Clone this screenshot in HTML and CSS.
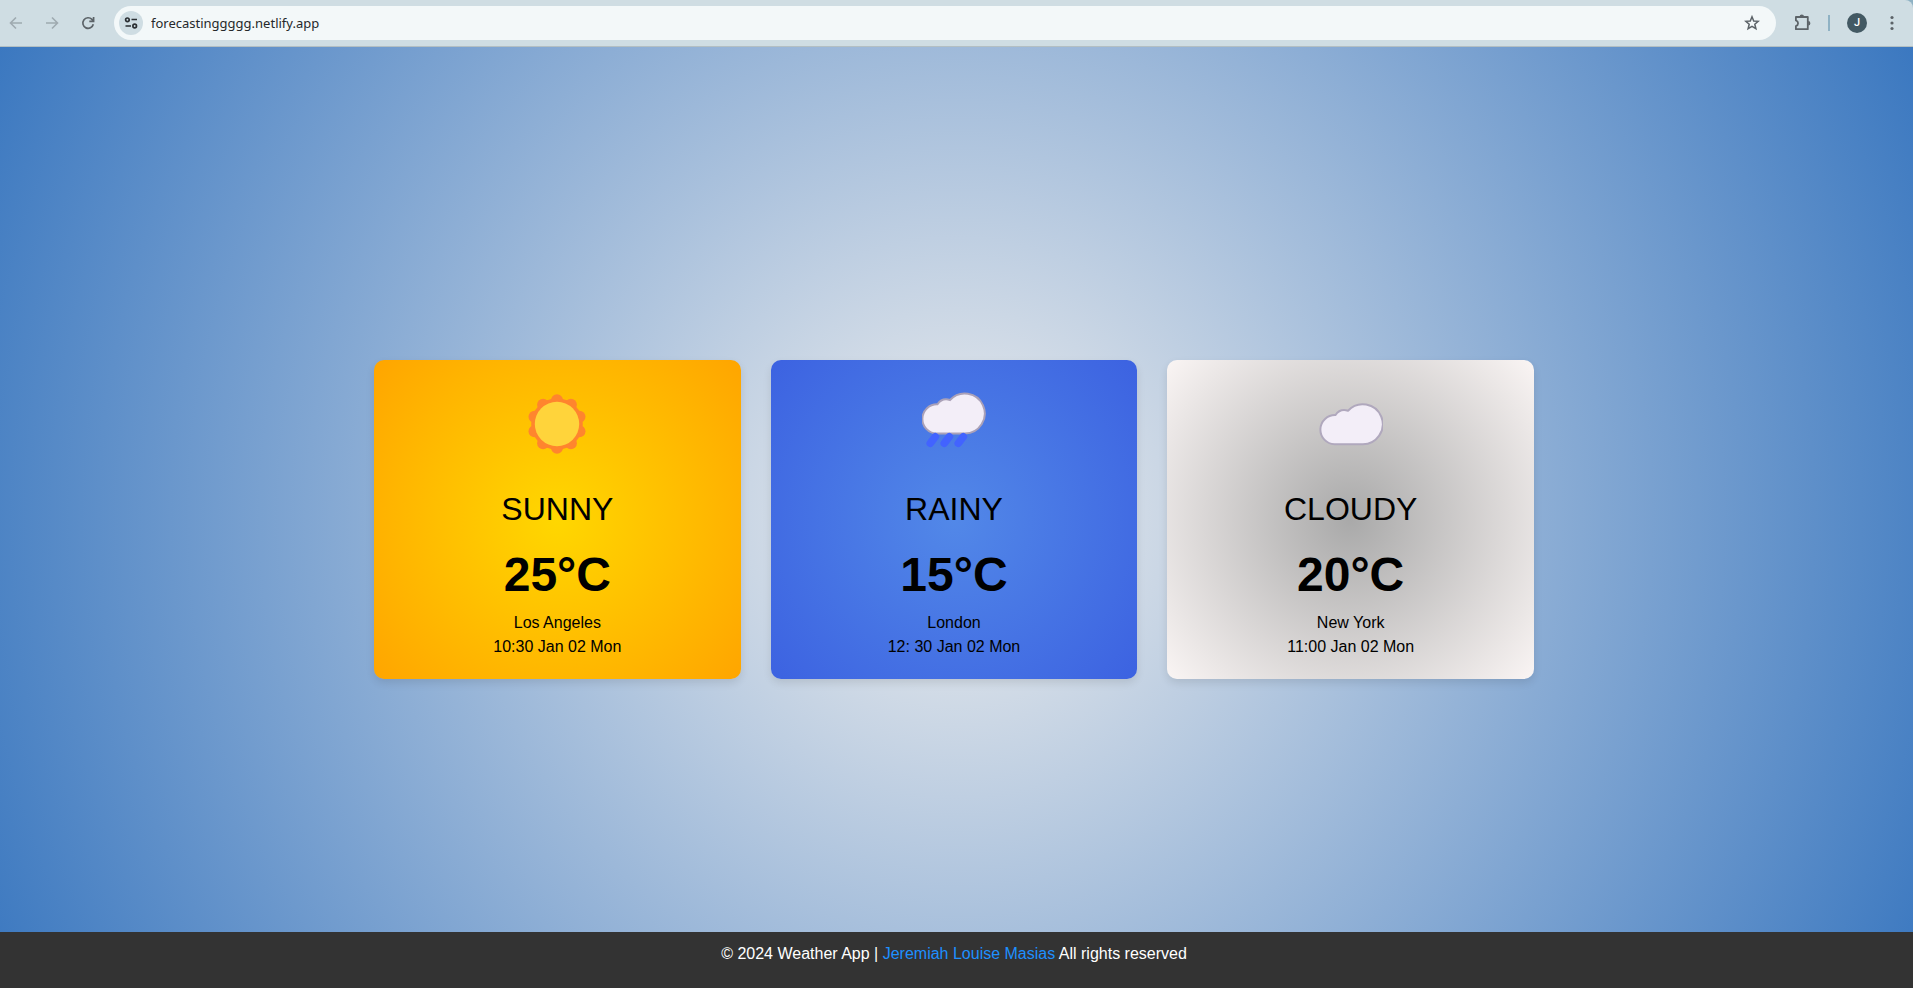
FILE: index.html
```html
<!DOCTYPE html>
<html lang="en">
<head>
<meta charset="utf-8">
<title>Weather App</title>
<link rel="stylesheet" href="styles.css">
</head>
<body>
<header class="toolbar">
  <nav class="nav-buttons" aria-label="Browser navigation">
    <button class="icon-button disabled" type="button" aria-label="Back">
      <svg width="16" height="16" viewBox="0 0 16 16" fill="none" stroke="currentColor" stroke-width="1.6"><path d="M14 8H3M8 2.5L2.5 8L8 13.500"/></svg>
    </button>
    <button class="icon-button disabled" type="button" aria-label="Forward">
      <svg width="16" height="16" viewBox="0 0 16 16" fill="none" stroke="currentColor" stroke-width="1.6"><path d="M2 8H13M8 2.500L13.500 8L8 13.500"/></svg>
    </button>
    <button class="icon-button" type="button" aria-label="Reload">
      <svg width="16" height="16" viewBox="0 0 16 16" fill="none" stroke="currentColor" stroke-width="1.7"><path d="M13.300 9.300A5.300 5.300 0 1 1 12 4.400L13.300 5.700M13.600 2V6.300H9.300"/></svg>
    </button>
  </nav>
  <div class="address-bar">
    <button class="site-info" type="button" aria-label="Site information">
      <svg width="14" height="14" viewBox="0 0 14 14" fill="none" stroke="currentColor" stroke-width="1.700"><circle cx="3.400" cy="3.800" r="1.800"/><path d="M7.500 3.500H13M1.500 10H7"/><circle cx="10.700" cy="10" r="1.800"/></svg>
    </button>
    <input class="address" type="text" aria-label="Address" value="forecastinggggg.netlify.app">
    <button class="bookmark" type="button" aria-label="Bookmark">
      <svg width="16" height="16" viewBox="0 0 16 16" fill="none" stroke="currentColor" stroke-width="1.500"><path d="M8 1.800L9.700 6L14.200 6.300L10.800 9.200L11.900 13.700L8 11.300L4.100 13.700L5.200 9.200L1.800 6.300L6.300 6Z"/></svg>
    </button>
  </div>
  <div class="toolbar-actions">
    <button class="icon-button" type="button" aria-label="Extensions">
      <svg width="18" height="18" viewBox="0 0 18 18"><path d="M2.900 3H14.800V15.200H2.900V12C5.800 11 5.800 7.400 2.900 6.400Z" fill="none" stroke="currentColor" stroke-width="1.800" stroke-linejoin="round"/><path d="M6.600 2.600A2.200 2.200 0 0 1 11 2.600ZM15.200 7A2.200 2.200 0 0 1 15.200 11.400Z" fill="currentColor"/></svg>
    </button>
    <span class="divider"></span>
    <button class="avatar" type="button" aria-label="Profile">J</button>
    <button class="icon-button" type="button" aria-label="Menu">
      <svg width="16" height="16" viewBox="0 0 16 16" fill="currentColor"><circle cx="8" cy="2.500" r="1.600"/><circle cx="8" cy="8" r="1.600"/><circle cx="8" cy="13.500" r="1.600"/></svg>
    </button>
  </div>
</header>

<div class="page">
  <main class="forecast">
    <article class="card sunny">
      <svg class="weather-icon" viewBox="0 0 64 64" aria-hidden="true">
        <g fill="#ff852e"><circle cx="32" cy="32" r="25.800"/>
        <circle cx="32" cy="8.300" r="6"/><circle cx="45.900" cy="12.800" r="6"/><circle cx="54.500" cy="24.700" r="6"/><circle cx="54.500" cy="39.300" r="6"/><circle cx="45.900" cy="51.200" r="6"/><circle cx="32" cy="55.700" r="6"/><circle cx="18.100" cy="51.200" r="6"/><circle cx="9.500" cy="39.300" r="6"/><circle cx="9.500" cy="24.700" r="6"/><circle cx="18.100" cy="12.800" r="6"/></g>
        <circle cx="32" cy="32" r="22.200" fill="#ffd43b"/>
      </svg>
      <h2 class="condition">SUNNY</h2>
      <p class="temperature">25°C</p>
      <p class="detail">Los Angeles</p>
      <p class="detail">10:30 Jan 02 Mon</p>
    </article>
    <article class="card rainy">
      <svg class="weather-icon" viewBox="0 0 64 64" aria-hidden="true">
        <path d="M14.500 41.500A14.500 14.500 0 0 1 15.500 12.300Q20 5.500 28 8A20 20 0 1 1 43 41.500Z" fill="#f3eef8" stroke="#aaa1b8" stroke-width="2"/>
        <path d="M13.300 44.700L8.300 51.300M27.300 44.700L22.300 51.300M41.300 44.700L36.300 51.300" stroke="#4263ff" stroke-width="7.600" stroke-linecap="round"/>
      </svg>
      <h2 class="condition">RAINY</h2>
      <p class="temperature">15°C</p>
      <p class="detail">London</p>
      <p class="detail">12: 30 Jan 02 Mon</p>
    </article>
    <article class="card cloudy">
      <svg class="weather-icon" viewBox="0 0 64 64" aria-hidden="true">
        <path d="M15.500 52.200A14.500 14.500 0 0 1 16.500 23Q21 16.200 29 18.700A20 20 0 1 1 43 52.200Z" fill="#f3eef8" stroke="#b0a8bd" stroke-width="2"/>
      </svg>
      <h2 class="condition">CLOUDY</h2>
      <p class="temperature">20°C</p>
      <p class="detail">New York</p>
      <p class="detail">11:00 Jan 02 Mon</p>
    </article>
  </main>
  <footer class="footer">
    <p>© 2024 Weather App | <a href="#">Jeremiah Louise Masias</a> All rights reserved</p>
  </footer>
</div>
</body>
</html>
```
FILE: styles.css
```css
* {
  box-sizing: border-box;
}

body {
  display: flex;
  flex-direction: column;
  min-height: 100vh;
  margin: 0;
  background: #8fb2c4;
  color: #000;
  font: 16px/24px "Liberation Sans", Arial, sans-serif;
}

h2,
p {
  margin: 0;
}

button {
  display: flex;
  align-items: center;
  justify-content: center;
  padding: 0;
  border: 0;
  background: none;
  color: #5c6368;
}

.toolbar {
  display: flex;
  align-items: center;
  gap: 10px;
  height: 47px;
  padding: 0 8px 1px;
  border-bottom: 1px solid #b3bfc3;
  border-top-right-radius: 8px;
  background: #cfdde3;
}

.nav-buttons {
  display: flex;
  gap: 20px;
  padding-right: 8px;
}

.nav-buttons .icon-button {
  width: 16px;
  height: 16px;
}

.icon-button.disabled {
  color: #9faab0;
}

.address-bar {
  display: flex;
  flex: 1;
  align-items: center;
  gap: 8px;
  height: 34px;
  padding: 0 16px 0 5px;
  border-radius: 17px;
  background: #f3f8f9;
}

.site-info {
  width: 24px;
  height: 24px;
  border-radius: 50%;
  background: #cfdde3;
  color: #2b2f33;
}

.address {
  flex: 1;
  min-width: 0;
  padding: 0;
  border: 0;
  outline: 0;
  background: none;
  color: #25282b;
  font: 13px/20px "Noto Sans", "Open Sans", sans-serif;
}

.toolbar-actions {
  display: flex;
  align-items: center;
  gap: 17px;
  padding: 0 5px 0 7px;
}

.divider {
  width: 2px;
  height: 16px;
  background: #8fb2c4;
}

.avatar {
  width: 20px;
  height: 20px;
  border-radius: 50%;
  background: #435963;
  color: #fff;
  font: 500 11px/20px Roboto, sans-serif;
}

.page {
  display: flex;
  flex: 1;
  flex-direction: column;
  background: radial-gradient(circle, #eeeeee, #3b78c0);
}

.forecast {
  display: grid;
  flex: 1;
  grid-template-columns: repeat(3, 1fr);
  gap: 30px;
  align-content: center;
  width: 100%;
  max-width: 1165px;
  margin: 0 auto;
  padding: 59px 5px 0 0;
}

.card {
  display: flex;
  flex-direction: column;
  align-items: center;
  padding: 32px 20px 20px;
  border-radius: 10px;
  box-shadow: 0 4px 8px rgba(0, 0, 0, 0.1);
  text-align: center;
}

.sunny {
  background: radial-gradient(circle, #ffd700, #ffa500);
}

.rainy {
  background: radial-gradient(circle, #5288e8, #3c62e1);
}

.cloudy {
  background: radial-gradient(circle, #a9a9a9, #faf5f4);
}

.weather-icon {
  width: 64px;
  height: 64px;
}

.condition {
  margin-top: 29px;
  font-size: 32px;
  font-weight: 400;
  line-height: 48px;
}

.temperature {
  padding: 8px 0 2px;
  font-size: 48px;
  font-weight: 700;
  line-height: 68px;
}

.footer {
  min-height: 56px;
  padding: 10px 15px 10px 10px;
  background: #333;
  color: #fff;
  text-align: center;
}

.footer a {
  color: #1e90ff;
  text-decoration: none;
}
```
